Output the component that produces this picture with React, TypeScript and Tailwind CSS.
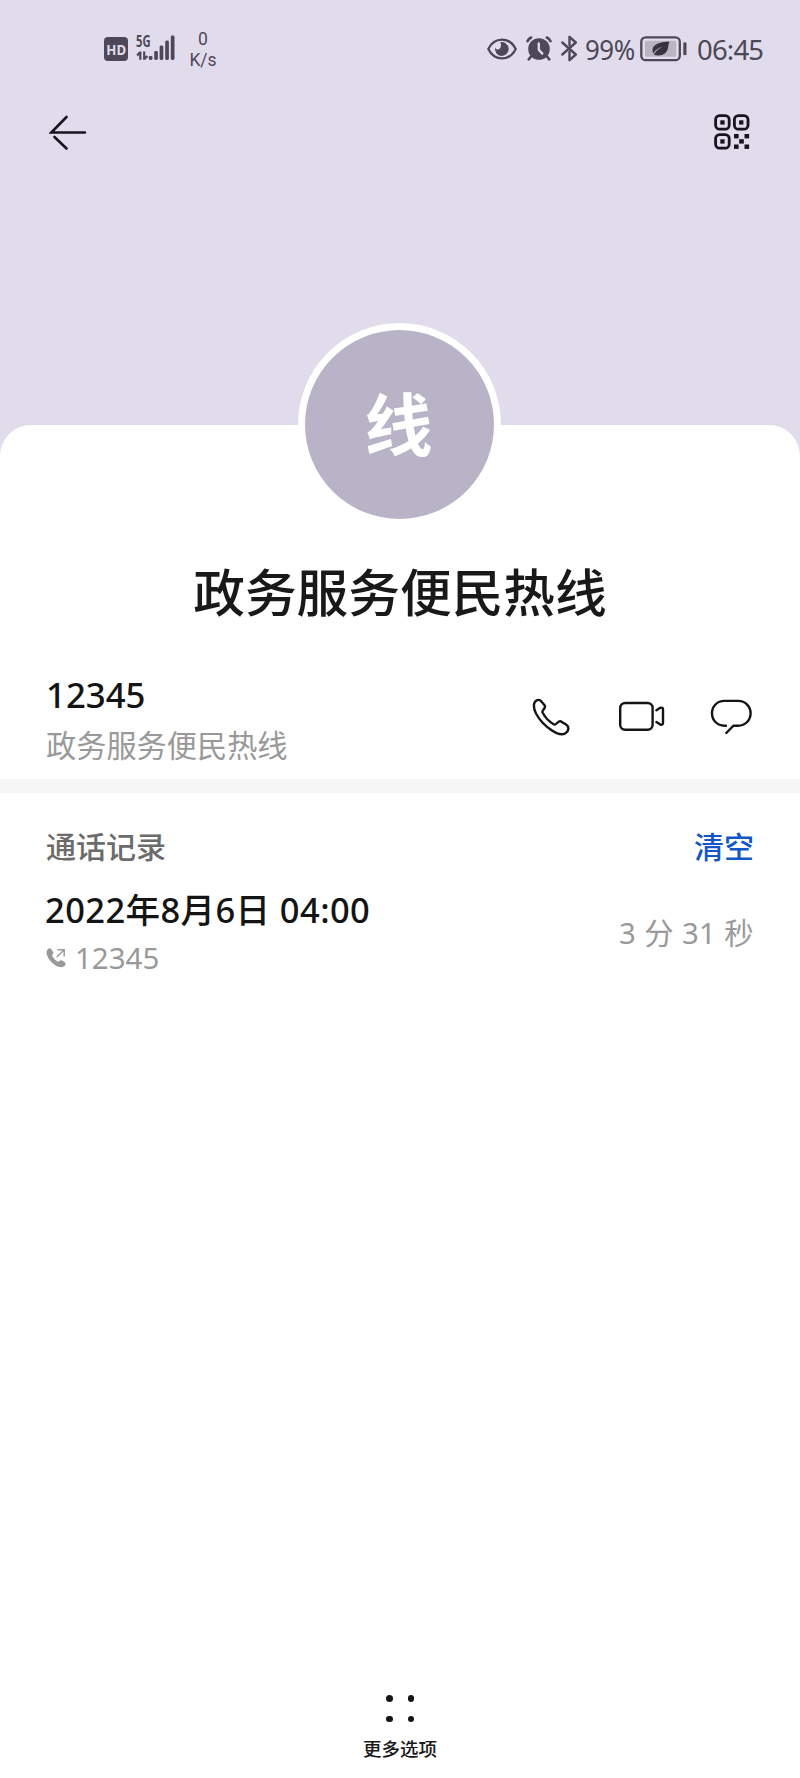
import type { ReactNode } from "react";

const ink = "#4d4857";

function HdIcon() {
    return <div className="flex h-6 w-6 items-center justify-center rounded-[4px] bg-[#4d4857] text-[#e1dcec]">
        <span className="inline-block scale-x-[0.88] text-[15px] leading-none font-bold">HD</span>
    </div>
}

function SignalIcon() {
    return <svg width="40" height="26" viewBox="0 0 40 26" fill={ink} className="absolute inset-0">
        <path d="M4.3 16.5v8.2M4.3 17l-3.2 3.4M8.2 16.5v8.2M8.2 24.3l3.2-3.4" stroke={ink} strokeWidth="2.2" fill="none" />
        <rect x="12.8" y="21" width="3.7" height="4" rx="1.4" />
        <rect x="18.2" y="16" width="3.7" height="9" rx="1.4" />
        <rect x="23.6" y="10.5" width="3.7" height="14.5" rx="1.4" />
        <rect x="29.2" y="5.5" width="3.7" height="19.5" rx="1.4" />
        <rect x="34.8" y="0.5" width="3.7" height="24.5" rx="1.4" />
    </svg>
}

function EyeIcon() {
    return <svg width="30" height="22" viewBox="0 0 30 22" fill="none">
        <path d="M1.3 11C4 5.500 9 1.600 15 1.600S26 5.500 28.700 11C26 16.500 21 20.400 15 20.400S4 16.500 1.300 11Z" stroke={ink} strokeWidth="2.300" strokeLinejoin="round" />
        <path d="M13.200 4.300a6.900 6.900 0 1 1-5.100 5.200c.6 1.700 2.200 2.400 3.700 1.700 2.300-1 2.900-4.500 1.400-6.900Z" fill={ink} />
    </svg>
}

function AlarmIcon() {
    return <svg width="26" height="25" viewBox="0 0 26 25" fill="none" strokeLinecap="round">
        <circle cx="13" cy="13" r="10.800" fill={ink} />
        <path d="M1.500 5.200C2.300 3.500 3.500 2.400 5.200 1.500M24.500 5.200C23.700 3.500 22.500 2.400 20.800 1.500M5 20.500l-2.300 2.800M21 20.500l2.300 2.800" stroke={ink} strokeWidth="2.600" />
        <path d="M12.800 7.500v6.300l3.500 3.800" stroke="#e1dcec" strokeWidth="2.300" />
    </svg>
}

function BluetoothIcon() {
    return <svg width="17" height="27" viewBox="0 0 17 27" fill="none" stroke={ink} strokeWidth="2.400" strokeLinecap="round" strokeLinejoin="round">
        <path d="M1.300 7.500 14.800 19.500 8.500 25.200V17M1.300 19.500 14.800 7.500 8.500 1.800V10" />
    </svg>
}

function BatteryIcon() {
    return <svg width="48" height="26" viewBox="0 0 48 26" fill="none">
        <rect x="1.300" y="1.300" width="38.500" height="22.900" rx="4.500" stroke={ink} strokeWidth="2.300" />
        <rect x="5" y="4.800" width="31.200" height="16" rx="1" fill="#b9b5c0" />
        <rect x="43.300" y="6.300" width="3.200" height="13" rx="1.400" fill={ink} />
        <path d="M29.300 5.500C22 6 14.500 7.200 12.800 12.300c-.6 1.900-.2 3.700.4 5.200C15.500 13.800 18.500 12 22.500 10.500c-3.500 2-6.800 4.700-8.700 8.200 6.500 1.800 13.200.2 14.300-7.200.3-2 .5-4 1.200-6Z" fill="#37323f" />
    </svg>
}

function QrIcon() {
    return <svg width="36" height="36" viewBox="0 0 36 36" fill="none" stroke="#17131f" strokeWidth="2.800">
        <rect x="1.600" y="1.600" width="13.600" height="13.600" rx="4" />
        <rect x="20.400" y="1.600" width="13.600" height="13.600" rx="4" />
        <rect x="1.600" y="20.600" width="13.600" height="13.600" rx="4" />
        <g fill="#17131f" stroke="none">
            <rect x="6.300" y="6.300" width="4.300" height="4.300" />
            <rect x="25.100" y="6.300" width="4.300" height="4.300" />
            <rect x="6.300" y="25.300" width="4.300" height="4.300" />
            <rect x="20" y="20" width="4.600" height="4.400" />
            <rect x="30.500" y="20" width="4.600" height="4.400" />
            <rect x="25.200" y="25.200" width="4.600" height="4.400" />
            <rect x="20" y="30.500" width="4.600" height="4.400" />
            <rect x="30.500" y="30.500" width="4.600" height="4.400" />
        </g>
    </svg>
}

function LineIcon({ w, h, children }: { w: number, h: number, children: ReactNode }) {
    return <svg width={w} height={h} viewBox={`0 0 ${w} ${h}`} fill="none" stroke="#141414"
        strokeWidth="2.400" strokeLinecap="round" strokeLinejoin="round">
        {children}
    </svg>
}

function StatusBar() {
    return <div className="flex h-[98px] items-start pl-[104px] text-[#4d4857]">
        <div className="mt-[37px]"><HdIcon /></div>
        <div className="relative mt-[35px] ml-[8px] h-[26px] w-10">
            <SignalIcon />
            <span className="block origin-left scale-x-[0.7] text-[16px] leading-[12px] font-bold">5G</span>
        </div>
        <div className="mt-[29px] ml-[9px] w-[36px] text-center font-['Roboto',sans-serif] text-[17.500px] leading-[20.500px]">
            <div>0</div>
            <div>K/s</div>
        </div>
        <div className="mt-[38px] ml-[266px]"><EyeIcon /></div>
        <div className="mt-[36px] ml-[9px]"><AlarmIcon /></div>
        <div className="mt-[35px] ml-[9px]"><BluetoothIcon /></div>
        <div className="mt-[35px] ml-[7px] w-[50px] text-[27.500px] leading-[30px] tracking-[-0.5px] whitespace-nowrap">
            <span className="inline-block origin-left scale-x-[0.94]">99%</span>
        </div>
        <div className="mt-[36px] ml-[5px]"><BatteryIcon /></div>
        <div className="mt-[35px] ml-[9px] text-[27.500px] leading-[30px] tracking-[-0.8px]">06:45</div>
    </div>
}

export default function App() {
    return <div className="flex h-[1778px] w-[800px] flex-col overflow-hidden bg-[#e1dcec] font-['Noto_Sans','Noto_Sans_CJK_SC',sans-serif]">
        <header className="h-[425px] shrink-0">
            <StatusBar />
            <div className="flex items-center justify-between pt-[16px] pr-[50px] pl-[49px]">
                <button>
                    <svg width="38" height="36" viewBox="0 0 38 36" fill="none" stroke="#17131f" strokeWidth="2.600" strokeLinecap="round">
                        <path d="M17.500 3 2.300 18.500H36M5.500 23l12 11.500" />
                    </svg>
                </button>
                <button><QrIcon /></button>
            </div>
        </header>
        <main className="flex flex-1 flex-col rounded-t-[31px] bg-white">
            <div className="-mt-[102px] ml-[298px] flex h-[203px] w-[203px] items-center justify-center rounded-full border-[7px] border-white bg-[#b9b3c8] pr-[2px] text-[68px] leading-none font-bold text-white">
                线
            </div>
            <h1 className="mt-[30px] text-center text-[51.700px] leading-[72px] font-medium text-[#191919]">政务服务便民热线</h1>

            <section className="flex h-[151px] items-start justify-between pr-[47px] pl-[46px]">
                <div className="pt-[44px]">
                    <div className="text-[34.800px] leading-[46px] font-medium text-[#141414]">12345</div>
                    <div className="mt-[8px] text-[30.200px] leading-[40px] text-[#999999]">政务服务便民热线</div>
                </div>
                <div className="flex pt-[70px]">
                    <LineIcon w={40} h={38}>
                        <path d="M2.200 5.500C2.800 2.800 6 .8 8.500 2.500L12.600 7.200C14.800 9.800 9.500 12 10.500 14.500 13.500 20 17.500 24 22 26.500 24.500 27.500 26 22 29 23.400L34 26.500C37.500 28.800 37 33 33.500 35.200 30 37.500 24.500 35.500 20 32.500 13 28 7.500 22 4 15.500 2.200 12 1.500 8.500 2.200 5.500Z" />
                    </LineIcon>
                    <div className="mt-[3px] ml-[46px]">
                        <LineIcon w={48} h={32}>
                            <rect x="2.200" y="2" width="32.400" height="26.800" rx="5" />
                            <path d="M38.400 9.200l3.800-2.400q2.800-.8 2.800 1.500v13.700q0 2.300-2.800 1.500l-3.800-2.400" />
                        </LineIcon>
                    </div>
                    <div className="mt-px ml-[43px]">
                        <LineIcon w={44} h={36}>
                            <path d="M17 26.700H15.500C8 26.700 3 21 3 14.200S8 1.900 15.500 1.900H29C36.500 1.900 41.600 7.500 41.600 14.200S36.500 26.700 29 26.700H24.500L17.300 34" />
                        </LineIcon>
                    </div>
                </div>
            </section>

            <div className="h-[14px] bg-[#f6f6f6]" />

            <section className="pr-[46px] pl-[45px]">
                <div className="flex items-center justify-between pt-[34px] text-[30px] leading-[40px]">
                    <h2 className="pl-px font-medium text-[#6b6b6b]">通话记录</h2>
                    <button className="font-medium text-[#1257c9]">清空</button>
                </div>
                <div className="mt-[20px] flex items-center justify-between">
                    <div>
                        <div className="text-[34.500px] leading-[46px] font-medium tracking-[0.4px] whitespace-nowrap text-[#141414]">2022年8月6日 04:00</div>
                        <div className="mt-[5px] flex items-center text-[29.500px] leading-[40px] text-[#999999]">
                            <svg width="21" height="22" viewBox="0 0 21 22" fill="#999999" className="mr-[8px] ml-px">
                                <path d="M1.800 2.200C3 1 4.800 1 5.600 2.400L7.200 5.200C7.600 6 7.300 6.800 6.500 7.600 6 8.200 6.200 8.800 6.600 9.500 7.900 11.800 9.500 13.400 11.600 14.500 12.400 14.900 13 14.600 13.500 14 14.200 13.100 15 13 15.900 13.500L18.600 15.100C19.800 16 19.800 17.600 18.700 18.800 17.200 20.400 14.800 20.600 12.500 19.800 7.200 17.800 2.800 13.400 1 8 .2 5.600.4 3.600 1.800 2.200Z" />
                                <path d="M10.800 10 17.500 3.500M11.500 2.800H18.200V9.500" fill="none" stroke="#999999" strokeWidth="1.400" />
                            </svg>
                            12345
                        </div>
                    </div>
                    <div className="text-[29.300px] leading-[40px] tracking-[0.4px] text-[#999999]">3 分 31 秒</div>
                </div>
            </section>

            <footer className="mt-auto flex h-[88px] flex-col items-center">
                <div className="grid grid-cols-2 gap-x-[15px] gap-y-[14px] pt-[5px]">
                    <span className="size-[6.500px] rounded-full bg-[#141414]" />
                    <span className="size-[6.500px] rounded-full bg-[#141414]" />
                    <span className="size-[6.500px] rounded-full bg-[#141414]" />
                    <span className="size-[6.500px] rounded-full bg-[#141414]" />
                </div>
                <div className="mt-[14px] text-[18.500px] leading-[26px] font-medium text-[#191919]">更多选项</div>
            </footer>
        </main>
    </div>
}
